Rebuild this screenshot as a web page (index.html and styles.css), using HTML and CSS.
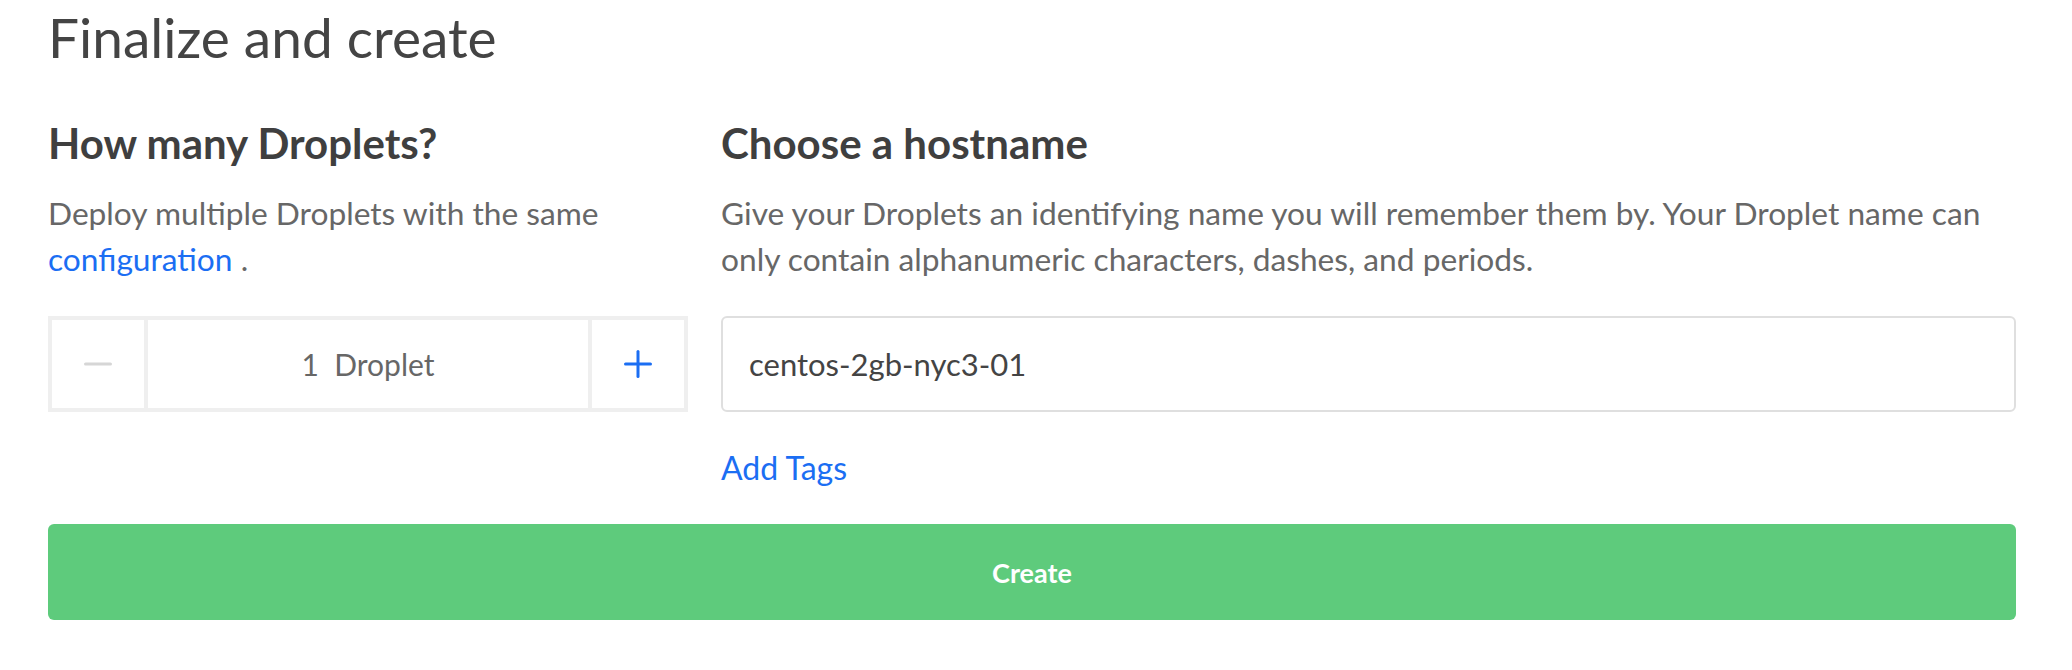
FILE: index.html
```html
<!DOCTYPE html>
<html lang="en">
<head>
<meta charset="utf-8">
<title>Finalize and create</title>
<link rel="stylesheet" href="styles.css">
</head>
<body>
<main class="page">
  <h1 class="title">Finalize and create</h1>
  <div class="columns">
    <section class="col">
      <h2 class="heading">How many Droplets?</h2>
      <p class="desc">Deploy multiple Droplets with the same <a class="link" href="#">configuration</a> .</p>
      <div class="stepper">
        <button class="step-btn minus" type="button" aria-label="Decrease">
          <svg width="28" height="4" viewBox="0 0 28 4"><line x1="1.5" y1="2" x2="26.5" y2="2" stroke="#d6d6d6" stroke-width="3" stroke-linecap="round"/></svg>
        </button>
        <div class="step-value">1&nbsp; Droplet</div>
        <button class="step-btn plus" type="button" aria-label="Increase">
          <svg width="28" height="28" viewBox="0 0 28 28"><line x1="1.5" y1="14" x2="26.5" y2="14" stroke="#1b6ef3" stroke-width="3" stroke-linecap="round"/><line x1="14" y1="1.5" x2="14" y2="26.5" stroke="#1b6ef3" stroke-width="3" stroke-linecap="round"/></svg>
        </button>
      </div>
    </section>
    <section class="col">
      <h2 class="heading">Choose a hostname</h2>
      <p class="desc">Give your Droplets an identifying name you will remember them by. Your Droplet name can only contain alphanumeric characters, dashes, and periods.</p>
      <input class="host-input" type="text" value="centos-2gb-nyc3-01">
      <a class="link tags" href="#">Add Tags</a>
    </section>
  </div>
  <button class="create" type="button">Create</button>
</main>
</body>
</html>
```

FILE: styles.css
```css
* { box-sizing: border-box; }

html, body {
  margin: 0;
  padding: 0;
  background: #ffffff;
}

body {
  font-family: Lato, "Open Sans", sans-serif;
  color: #444444;
}

.page {
  padding: 7px 56px 0 48px;
}

.title {
  margin: 0;
  font-size: 55px;
  line-height: 60px;
  font-weight: 400;
  color: #444444;
}

.columns {
  display: grid;
  grid-template-columns: 640px 1fr;
  column-gap: 33px;
  margin-top: 53px;
}

.col {
  display: flex;
  flex-direction: column;
  align-items: flex-start;
}

.heading {
  margin: 0;
  font-size: 42px;
  line-height: 46px;
  font-weight: 700;
  color: #3f3f3f;
}

.desc {
  margin: 24px 0 0;
  font-size: 31.7px;
  line-height: 46px;
  color: #676767;
}

.link {
  color: #1b6ef3;
  text-decoration: none;
}

.stepper {
  margin-top: 34px;
  width: 640px;
  height: 96px;
  display: flex;
  border: 4px solid #efefef;
}

.step-btn {
  flex: 0 0 96px;
  display: flex;
  align-items: center;
  justify-content: center;
  background: #ffffff;
  border: 0;
  padding: 0;
}

.step-btn.minus { border-right: 4px solid #efefef; }
.step-btn.plus { border-left: 4px solid #efefef; }

.step-value {
  flex: 1;
  display: flex;
  align-items: center;
  justify-content: center;
  font-size: 30px;
  color: #676767;
}

.host-input {
  margin-top: 34px;
  width: 100%;
  height: 96px;
  border: 2px solid #dfdfdf;
  border-radius: 6px;
  padding: 0 26px;
  font-family: Lato, "Open Sans", sans-serif;
  font-size: 31px;
  color: #444444;
  background: #ffffff;
  outline: none;
}

.tags {
  margin-top: 33px;
  font-size: 32px;
  line-height: 46px;
}

.create {
  display: block;
  width: 100%;
  height: 96px;
  margin-top: 33px;
  border: 0;
  border-radius: 6px;
  background: #5ecb7c;
  color: #ffffff;
  font-family: Lato, "Open Sans", sans-serif;
  font-size: 27px;
  font-weight: 700;
}
```
